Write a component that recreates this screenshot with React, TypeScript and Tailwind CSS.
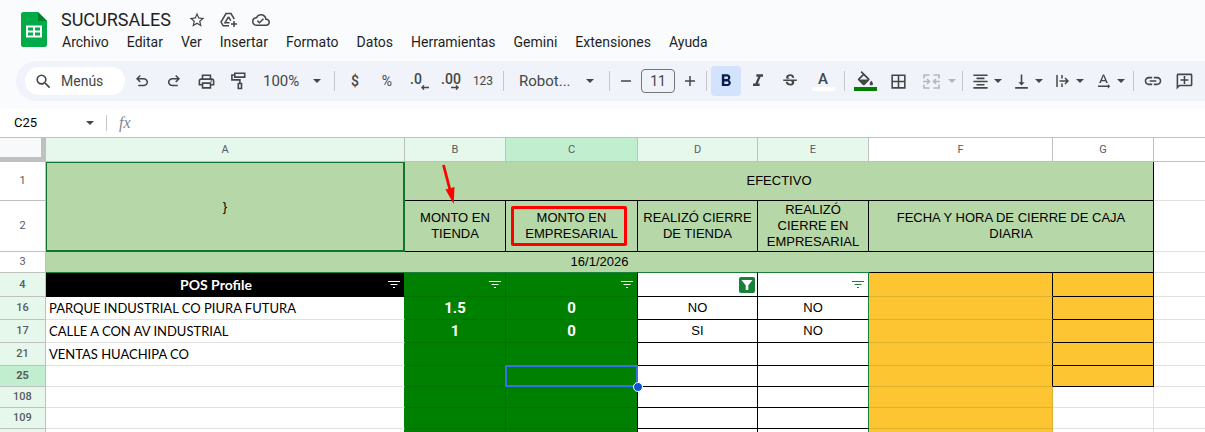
import type { ReactNode } from 'react';
import clsx from 'clsx';
import {
  MdBorderAll,
  MdFormatAlignCenter,
  MdFormatBold,
  MdFormatItalic,
  MdLink,
  MdOutlineAddComment,
  MdOutlineCloudDone,
  MdOutlinePrint,
  MdSearch,
  MdStarBorder,
  MdStrikethroughS,
  MdTextRotationNone,
  MdVerticalAlignBottom,
} from 'react-icons/md';

const menus = ['Archivo', 'Editar', 'Ver', 'Insertar', 'Formato', 'Datos', 'Herramientas', 'Gemini', 'Extensiones', 'Ayuda'];

const columns = [
  { name: 'A', width: 'w-[359px]', tone: 'bg-[#e6f8ec]' },
  { name: 'B', width: 'w-[101px]', tone: 'bg-[#e6f8ec]' },
  { name: 'C', width: 'w-[132px]', tone: 'bg-[#c2eed0]' },
  { name: 'D', width: 'w-[120px]', tone: 'bg-[#e6f8ec]' },
  { name: 'E', width: 'w-[111px]', tone: 'bg-[#e6f8ec]' },
  { name: 'F', width: 'w-[184px]', tone: 'bg-white' },
  { name: 'G', width: 'w-[101px]', tone: 'bg-white' },
];

interface Row {
  id: number;
  n?: string;
  height: string;
  profile?: string;
  tienda?: string;
  empresarial?: string;
  cierreTienda?: string;
  cierreEmpresarial?: string;
  selected?: boolean;
  outside?: boolean;
}

const rows: Row[] = [
  { id: 1, n: '16', height: 'h-[23px]', profile: 'PARQUE INDUSTRIAL CO PIURA FUTURA', tienda: '1.5', empresarial: '0', cierreTienda: 'NO', cierreEmpresarial: 'NO' },
  { id: 2, n: '17', height: 'h-[23px]', profile: 'CALLE A CON AV INDUSTRIAL', tienda: '1', empresarial: '0', cierreTienda: 'SI', cierreEmpresarial: 'NO' },
  { id: 3, n: '21', height: 'h-[23px]', profile: 'VENTAS HUACHIPA CO' },
  { id: 4, n: '25', height: 'h-[21px]', selected: true },
  { id: 5, n: '108', height: 'h-[21px]', outside: true },
  { id: 6, n: '109', height: 'h-[21px]', outside: true },
  { id: 7, height: 'h-[21px]', outside: true },
];

function SheetsLogo() {
  return (
    <svg className="w-[26px] h-9 mt-3 shrink-0" viewBox="0 0 26 36" aria-label="Hojas de cálculo">
      <path d="M2.500 0H17l9 9v23.500a2.500 2.500 0 0 1-2.500 2.500h-21A2.500 2.500 0 0 1 0 32.500V2.500A2.500 2.500 0 0 1 2.500 0z" fill="#00ac47" />
      <path d="M17 0l9 9h-9z" fill="#00832d" />
      <path d="M5 13.500h16v12H5z" fill="#fff" />
      <path d="M7 15.500h5v3H7zM14 15.500h5v3h-5zM7 20.500h5v3H7zM14 20.500h5v3h-5z" fill="#00ac47" />
    </svg>
  );
}

function Caret({ className = 'text-[#444746]' }: { className?: string }) {
  return (
    <svg className={clsx('w-2 h-1 shrink-0', className)} viewBox="0 0 8 4">
      <path d="M0 0h8L4 4z" fill="currentColor" />
    </svg>
  );
}

function Divider() {
  return (
    <div className="w-[9px] flex justify-center shrink-0">
      <div className="w-px h-5 bg-[#c7c7c7]" />
    </div>
  );
}

function Tool({ label, children, className = 'w-8' }: { label: string; children: ReactNode; className?: string }) {
  return (
    <button aria-label={label} className={clsx('h-[30px] shrink-0 flex items-center justify-center', className)}>
      {children}
    </button>
  );
}

/* Icon plus its own little menu arrow */
function SplitTool({ label, children }: { label: string; children: ReactNode }) {
  return (
    <button aria-label={label} className="w-[39px] h-[30px] shrink-0 flex items-center">
      <span className="w-[27px] flex justify-center">{children}</span>
      <Caret />
    </button>
  );
}

function FilterLines({ className = 'text-white' }: { className?: string }) {
  return (
    <button aria-label="Filtro" className={clsx('w-4 h-4 mr-0.5 flex items-center justify-center shrink-0', className)}>
      <svg className="w-3 h-[7px]" viewBox="0 0 12 7">
        <path d="M0 .5h12M2.500 3.500h7M5 6.500h2" stroke="currentColor" fill="none" />
      </svg>
    </button>
  );
}

function Toolbar() {
  return (
    <div className="ml-4 mt-[9px] h-10 pl-[9px] rounded-l-full bg-[#f0f3f9] text-[#444746] flex items-center overflow-hidden">
      <button className="w-[100px] h-7 mr-px pl-[9px] rounded-full bg-white flex items-center gap-2 text-sm shrink-0">
        <MdSearch size={19} />
        Menús
      </button>
      <Tool label="Deshacer">
        <svg width="18" height="18" viewBox="0 -960 960 960" fill="currentColor">
          <path d="M280-200v-80h284q63 0 109.500-40T720-420q0-60-46.500-100T564-560H312l104 104-56 56-200-200 200-200 56 56-104 104h252q97 0 169.500 63T800-420q0 94-72.500 157T564-200H280Z" />
        </svg>
      </Tool>
      <Tool label="Rehacer">
        <svg width="18" height="18" viewBox="0 -960 960 960" fill="currentColor">
          <path d="M396-200q-97 0-169.500-63T154-420q0-94 72.500-157T396-640h252L544-744l56-56 200 200-200 200-56-56 104-104H396q-63 0-109.500 40T240-420q0 60 46.500 100T396-280h284v80H396Z" />
        </svg>
      </Tool>
      <Tool label="Imprimir">
        <MdOutlinePrint size={19} />
      </Tool>
      <Tool label="Copiar formato">
        <svg width="15" height="18" viewBox="0 0 15 18" fill="none" stroke="currentColor" strokeWidth="1.600">
          <path d="M3.800 1.300h9.900v3.800H3.800zM3.800 3H.9v4.900h8v3M7.300 11.500h3.200v5H7.300z" />
        </svg>
      </Tool>
      <div className="w-[76px] pl-[9px] flex items-center shrink-0">
        <select aria-label="Zoom" className="appearance-none w-[50px] text-[15px]">
          <option>100%</option>
        </select>
        <Caret />
      </div>
      <Divider />
      <Tool label="Formato de moneda"><span className="text-sm font-medium">$</span></Tool>
      <Tool label="Formato de porcentaje"><span className="text-sm">%</span></Tool>
      <Tool label="Reducir decimales" className="w-8 flex-col">
        <span className="w-[18px] text-left text-sm leading-3 font-medium">.0</span>
        <svg className="w-2 h-[5px] ml-3" viewBox="0 0 8 5">
          <path d="M8 2.500H1M3 .3L.8 2.500 3 4.700" stroke="currentColor" strokeWidth="1.300" fill="none" />
        </svg>
      </Tool>
      <Tool label="Aumentar decimales" className="w-8 flex-col">
        <span className="text-sm leading-3 font-medium">.00</span>
        <svg className="w-2 h-[5px] ml-2" viewBox="0 0 8 5">
          <path d="M0 2.500h7M5 .3l2.200 2.200L5 4.700" stroke="currentColor" strokeWidth="1.300" fill="none" />
        </svg>
      </Tool>
      <Tool label="Más formatos"><span className="text-xs">123</span></Tool>
      <Divider />
      <div className="w-[97px] pl-[11px] flex items-center shrink-0">
        <select aria-label="Fuente" className="appearance-none w-[67px] text-[15px]">
          <option>Robot...</option>
        </select>
        <Caret />
      </div>
      <Divider />
      <Tool label="Reducir tamaño de fuente" className="w-6">
        <svg width="12" height="12" viewBox="0 0 12 12"><path d="M1 6h10" stroke="currentColor" strokeWidth="1.500" /></svg>
      </Tool>
      <input
        aria-label="Tamaño de fuente"
        defaultValue="11"
        className="w-[34px] h-6 mx-[3px] rounded border border-[#747775] text-center text-sm shrink-0"
      />
      <Tool label="Aumentar tamaño de fuente" className="w-6">
        <svg width="12" height="12" viewBox="0 0 12 12"><path d="M1 6h10M6 1v10" stroke="currentColor" strokeWidth="1.500" /></svg>
      </Tool>
      <Divider />
      <Tool label="Negrita" className="w-[30px] mr-px rounded bg-[#d3e3fd] text-[#041e49]">
        <MdFormatBold size={20} />
      </Tool>
      <Tool label="Cursiva"><MdFormatItalic size={20} /></Tool>
      <Tool label="Tachado"><MdStrikethroughS size={18} /></Tool>
      <Tool label="Color del texto" className="w-[34px] flex-col">
        <span className="text-[15px] leading-[15px] font-medium">A</span>
        <span className="w-[23px] h-1 bg-white" />
      </Tool>
      <Divider />
      <Tool label="Color de relleno" className="w-8 flex-col">
        <svg width="18" height="16" viewBox="1 0 21 19" fill="currentColor">
          <path d="M16.560 8.940L7.620 0 6.210 1.410l2.380 2.380-5.150 5.150c-.59.59-.59 1.540 0 2.120l5.500 5.500c.29.29.68.44 1.060.44s.77-.15 1.060-.44l5.500-5.500c.59-.58.59-1.530 0-2.120zM5.210 10L10 5.210 14.790 10H5.210zM19 11.500s-2 2.170-2 3.500c0 1.100.9 2 2 2s2-.9 2-2c0-1.330-2-3.500-2-3.500z" />
        </svg>
        <span className="w-[23px] h-1 bg-[#008000]" />
      </Tool>
      <Tool label="Bordes" className="w-[34px]"><MdBorderAll size={19} /></Tool>
      <button aria-label="Combinar celdas" disabled className="w-[43px] h-[30px] flex items-center shrink-0 text-[#b4b6b8]">
        <span className="w-[33px] flex justify-center">
          <svg width="17" height="15" viewBox="0 0 17 15" fill="none" stroke="currentColor" strokeWidth="1.600">
            <path d="M6.500 1H1v3.500M6.500 14H1v-3.500M10.500 1H16v3.500M10.500 14H16v-3.500M0 7.500h6M17 7.500h-6M4 5l2.500 2.500L4 10M13 5l-2.500 2.500L13 10" />
          </svg>
        </span>
        <Caret className="text-[#b4b6b8]" />
      </button>
      <Divider />
      <div className="flex gap-0.5 shrink-0">
        <SplitTool label="Alineación horizontal"><MdFormatAlignCenter size={19} /></SplitTool>
        <SplitTool label="Alineación vertical"><MdVerticalAlignBottom size={19} /></SplitTool>
        <SplitTool label="Ajuste de texto">
          <svg width="13" height="12" viewBox="0 0 13 12" fill="none" stroke="currentColor" strokeWidth="1.500">
            <path d="M1 0v12M6 0v3.500M6 8.500V12M3.500 6H12M9 3l3 3-3 3" />
          </svg>
        </SplitTool>
        <SplitTool label="Rotación de texto"><MdTextRotationNone size={19} /></SplitTool>
      </div>
      <Divider />
      <Tool label="Insertar vínculo" className="w-[30px]"><MdLink size={20} /></Tool>
      <Tool label="Insertar comentario"><MdOutlineAddComment size={19} className="-scale-x-100" /></Tool>
    </div>
  );
}

function Sheet() {
  const headBase = 'border-r border-b border-[#c0c0c0] p-0 text-[11px] text-[#575b5f] font-[Roboto,sans-serif]';
  const head = clsx(headBase, 'font-normal');
  const title = 'border-r border-b border-black bg-[#b6d7a8] p-0';
  const blank = 'border-b border-[#e1e1e1] p-0';

  return (
    <table className="w-full table-fixed border-separate border-spacing-0 border-t border-[#c0c0c0] text-[13px] leading-4 text-black text-center font-['Liberation_Sans',Arial,sans-serif]">
      <thead>
        <tr className="h-6">
          <th aria-label="Seleccionar todo" className="w-[46px] p-0 bg-[#f8f9fa] border-r-[5px] border-b-[5px] border-[#c0c0c0]" />
          {columns.map((c) => (
            <th key={c.name} scope="col" className={clsx(head, c.width, c.tone)}>{c.name}</th>
          ))}
          <th aria-label="H" className="p-0 border-b border-[#c0c0c0]" />
        </tr>
      </thead>
      <tbody>
        <tr className="h-[39px]">
          <th scope="row" className={head}>1</th>
          <td rowSpan={2} className="p-0 bg-[#b6d7a8] border-l border-t border-r-2 border-b-2 border-[#137333]">{'}'}</td>
          <td colSpan={6} className={clsx(title, 'relative')}>
            EFECTIVO
            <svg className="absolute z-10 left-9 top-0 w-5 h-[42px]" viewBox="0 0 20 42">
              <path d="M2.500 3L9 28" stroke="#f00" strokeWidth="2.800" />
              <path d="M4.500 27.500l9-2.500-.8 17z" fill="#f00" />
            </svg>
          </td>
          <td className={blank} />
        </tr>
        <tr className="h-[51px]">
          <th scope="row" className={head}>2</th>
          <td className={title}>MONTO EN<br />TIENDA</td>
          <td className={clsx(title, 'relative')}>
            MONTO EN<br />EMPRESARIAL
            <div className="absolute left-[5px] right-2.5 top-[5px] bottom-[5px] border-3 border-[#f00] rounded-xs" />
          </td>
          <td className={title}>REALIZÓ CIERRE<br />DE TIENDA</td>
          <td className={title}>REALIZÓ<br />CIERRE EN<br />EMPRESARIAL</td>
          <td colSpan={2} className={title}>FECHA Y HORA DE CIERRE DE CAJA<br />DIARIA</td>
          <td className={blank} />
        </tr>
        <tr className="h-5">
          <th scope="row" className="p-0 border-r border-[#c0c0c0] text-[11px] font-normal text-[#575b5f] font-[Roboto,sans-serif]">3</th>
          <td colSpan={7} className="p-0 bg-[#b6d7a8] border-r border-black">16/1/2026</td>
          <td className="p-0" />
        </tr>

        {/* Header row of the filtered range */}
        <tr className="h-[25px]">
          <th scope="row" className={clsx(headBase, 'font-medium border-t bg-[#e6f8ec]')}>4</th>
          <td className="p-0 bg-black text-white border-t border-t-[#188038] border-r border-r-[#008000] border-b border-b-black">
            <div className="flex items-center">
              <span className="flex-1 text-sm leading-4 font-bold font-[Lato,sans-serif]">POS Profile</span>
              <FilterLines />
            </div>
          </td>
          <td className="p-0 bg-[#008000] border-t border-t-[#188038] border-r border-b border-r-[#007400] border-b-[#007400]">
            <div className="flex justify-end"><FilterLines /></div>
          </td>
          <td className="p-0 bg-[#008000] border-t border-t-[#188038] border-r border-b border-r-black border-b-[#007400]">
            <div className="flex justify-end"><FilterLines /></div>
          </td>
          <td className="p-0 border-t border-t-[#188038] border-r border-b border-r-black border-b-black">
            <div className="flex justify-end">
              <button aria-label="Filtro activo" className="w-4 h-4 mr-0.5 rounded-xs bg-[#188038] flex items-center justify-center">
                <svg className="w-3 h-2.5" viewBox="0 0 12 10">
                  <path d="M.5 0h11L7.300 5.200V10H4.700V5.200z" fill="#fff" />
                </svg>
              </button>
            </div>
          </td>
          <td className="p-0 border-t border-t-[#188038] border-r border-b border-r-[#188038] border-b-black">
            <div className="flex justify-end"><FilterLines className="text-[#188038]" /></div>
          </td>
          <td className="p-0 bg-[#fcc531] border-t border-t-black border-r border-b border-r-black border-b-[#e0b030]" />
          <td className="p-0 bg-[#fcc531] border-t border-r border-b border-black" />
          <td className="p-0 border-t border-b border-[#e1e1e1]" />
        </tr>

        {rows.map((r) => (
          <tr key={r.id} className={r.height}>
            <th scope="row" className={clsx(headBase, r.selected ? 'bg-[#c2eed0] font-bold' : 'bg-[#e6f8ec] font-medium')}>{r.n}</th>
            <td className="py-0 pl-[3px] pr-0 text-left font-[Lato,sans-serif] border-r border-b border-r-[#008000] border-b-[#e1e1e1]">{r.profile}</td>
            <td className="p-0 bg-[#008000] text-white text-[15px] font-bold font-[Roboto,sans-serif] border-r border-b border-[#007400]">{r.tienda}</td>
            <td className="relative p-0 bg-[#008000] text-white text-[15px] font-bold font-[Roboto,sans-serif] border-r border-b border-r-black border-b-[#007400]">
              {r.empresarial}
              {r.selected && (
                <>
                  <div className="absolute z-10 -inset-px border-2 border-[#3271ea]" />
                  <div className="absolute z-20 -right-1.5 -bottom-1.5 w-2.5 h-2.5 rounded-full bg-[#0b57d0] border border-white" />
                </>
              )}
            </td>
            <td className="p-0 border-r border-b border-black">{r.cierreTienda}</td>
            <td className="p-0 border-r border-b border-r-[#188038] border-b-black">{r.cierreEmpresarial}</td>
            <td className={clsx('p-0 bg-[#fcc531] border-r border-b border-b-[#e0b030]', r.outside ? 'border-r-[#e0b030]' : 'border-r-black')} />
            <td className={clsx('p-0 border-r border-b', r.outside ? 'border-[#e1e1e1]' : 'bg-[#fcc531] border-black')} />
            <td className={blank} />
          </tr>
        ))}
      </tbody>
    </table>
  );
}

export default function App() {
  return (
    <div className="h-screen flex flex-col overflow-hidden bg-white font-[Roboto,sans-serif]">
      <header className="bg-[#f9fbfd] pb-2 shrink-0">
        <div className="flex pl-[21px] h-[52px]">
          <SheetsLogo />
          <div className="ml-3.5 mt-2">
            <div className="flex items-center h-6 text-[#444746]">
              <input aria-label="Nombre del documento" defaultValue="SUCURSALES" className="w-[120px] h-6 text-lg leading-6 text-[#1f1f1f]" />
              <Tool label="Destacar"><MdStarBorder size={18} /></Tool>
              <Tool label="Agregar a Drive">
                <svg width="18" height="16" viewBox="0 0 18 16" fill="none" stroke="currentColor" strokeWidth="1.500">
                  <path d="M9 13.800H3.200L1 10 6 1.500h5l3.300 5.600M8.500 4.800L5 10.700h4.500M8.500 4.800l2.300 3.900M14 9v6M11 12h6" />
                </svg>
              </Tool>
              <Tool label="Guardado en Drive"><MdOutlineCloudDone size={18} /></Tool>
            </div>
            <nav className="flex items-center gap-[18px] h-5 pl-px text-sm text-[#1f1f1f]">
              {menus.map((m) => (
                <button key={m}>{m}</button>
              ))}
            </nav>
          </div>
        </div>
        <Toolbar />
      </header>

      <div className="h-7 pl-3.5 flex items-center shrink-0">
        <input aria-label="Cuadro de nombres" defaultValue="C25" className="w-[72px] text-[13px] text-black" />
        <Caret />
        <div className="w-px h-4 ml-3 mr-3 bg-[#c7c7c7]" />
        <span className="text-base italic text-[#80868b] font-['Liberation_Serif',serif]">fx</span>
      </div>

      <main className="flex-1 overflow-hidden">
        <Sheet />
      </main>
    </div>
  );
}
